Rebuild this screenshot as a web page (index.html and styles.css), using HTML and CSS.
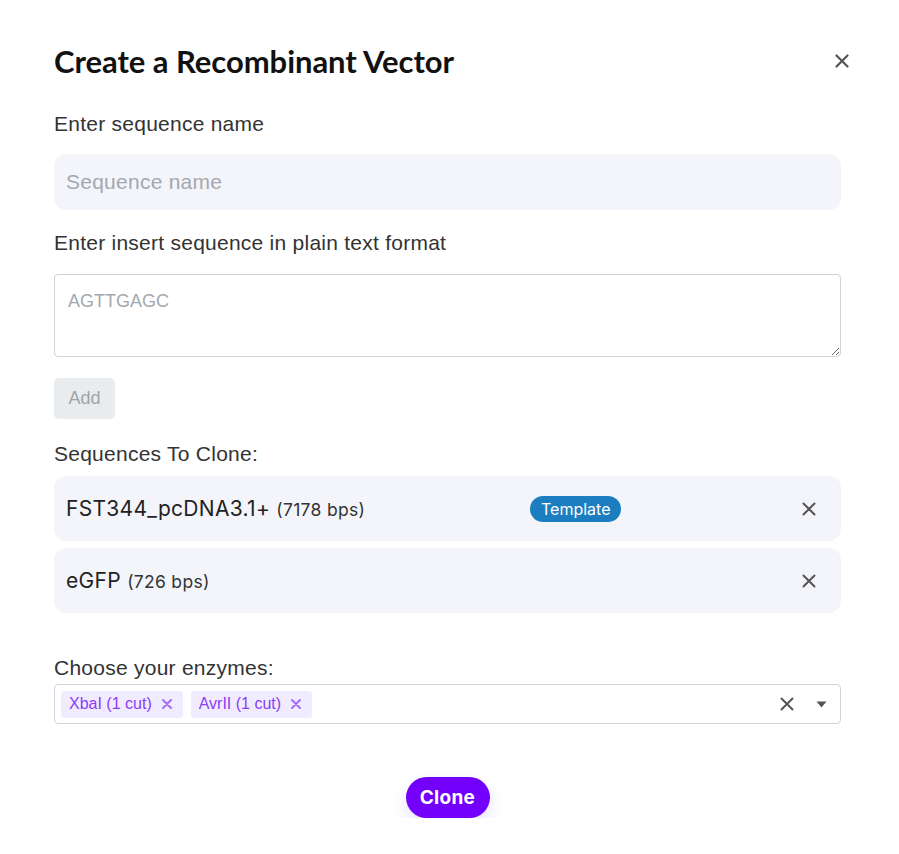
FILE: index.html
```html
<!DOCTYPE html>
<html>
<head>
<meta charset="utf-8">
<link rel="stylesheet" href="styles.css">
</head>
<body>
<div class="modal">
  <div class="header">
    <h1 class="title">Create a Recombinant Vector</h1>
    <button class="close" aria-label="Close">
      <svg width="14" height="14" viewBox="0 0 14 14"><path d="M1.5 1.5L12.5 12.5M12.5 1.5L1.5 12.5" stroke="#555" stroke-width="2.2" stroke-linecap="round"/></svg>
    </button>
  </div>

  <label class="label first">Enter sequence name</label>
  <input class="name-input" type="text" placeholder="Sequence name">

  <label class="label second">Enter insert sequence in plain text format</label>
  <textarea class="seq-area" placeholder="AGTTGAGC"></textarea>

  <button class="add-btn">Add</button>

  <div class="label third">Sequences To Clone:</div>
  <div class="seq-list">
    <div class="seq-card">
      <div class="seq-name">FST344_pcDNA3.1+ <span class="bps">(7178 bps)</span></div>
      <span class="badge">Template</span>
      <svg class="rm" width="14" height="14" viewBox="0 0 14 14"><path d="M1.5 1.5L12.5 12.5M12.5 1.5L1.5 12.5" stroke="#555" stroke-width="2" stroke-linecap="round"/></svg>
    </div>
    <div class="seq-card">
      <div class="seq-name">eGFP <span class="bps">(726 bps)</span></div>
      <svg class="rm" width="14" height="14" viewBox="0 0 14 14"><path d="M1.5 1.5L12.5 12.5M12.5 1.5L1.5 12.5" stroke="#555" stroke-width="2" stroke-linecap="round"/></svg>
    </div>
  </div>

  <div class="label fourth">Choose your enzymes:</div>
  <div class="select">
    <div class="chips">
      <span class="chip">XbaI (1 cut)<svg width="10" height="10" viewBox="0 0 10 10"><path d="M1 1L9 9M9 1L1 9" stroke="#a56ef5" stroke-width="2" stroke-linecap="round"/></svg></span>
      <span class="chip">AvrII (1 cut)<svg width="10" height="10" viewBox="0 0 10 10"><path d="M1 1L9 9M9 1L1 9" stroke="#a56ef5" stroke-width="2" stroke-linecap="round"/></svg></span>
    </div>
    <div class="controls">
      <svg width="14" height="14" viewBox="0 0 14 14"><path d="M1.5 1.5L12.5 12.5M12.5 1.5L1.5 12.5" stroke="#555" stroke-width="2" stroke-linecap="round"/></svg>
      <svg width="11" height="7" viewBox="0 0 11 7"><path d="M0.5 0.5H10.5L5.5 6.5Z" fill="#555"/></svg>
    </div>
  </div>

  <div class="footer">
    <button class="clone-btn">Clone</button>
  </div>
</div>
</body>
</html>
```

FILE: styles.css
```css
* { box-sizing: border-box; }
html, body { margin: 0; padding: 0; background: #fff; }
body { font-family: "Liberation Sans", Arial, sans-serif; color: #333; }

.modal {
  width: 899px;
  padding: 40px 58px 0 54px;
  display: flex;
  flex-direction: column;
}

.header {
  display: flex;
  justify-content: space-between;
  align-items: center;
  height: 42px;
}
.title {
  margin: 0;
  font-family: Lato, sans-serif;
  font-weight: 700;
  font-size: 31px;
  color: #111;
  letter-spacing: -0.05px;
}
.close {
  border: 0;
  background: none;
  padding: 0;
  margin-right: -8px;
  display: flex;
}

.label {
  display: block;
  font-size: 21px;
  letter-spacing: 0.25px;
  color: #333;
  line-height: 24px;
}
.label.first { margin-top: 30px; }
.label.second { margin-top: 21px; }
.label.third { margin-top: 23px; }
.label.fourth { margin-top: 43px; }

.name-input {
  margin-top: 18px;
  width: 787px;
  height: 56px;
  border: 0;
  border-radius: 12px;
  background: #f4f5fa;
  padding: 0 12px;
  font-family: "Liberation Sans", Arial, sans-serif;
  font-size: 21px;
  letter-spacing: 0.25px;
  outline: none;
}
.name-input::placeholder { color: #a4a8ae; }

.seq-area {
  margin-top: 19px;
  width: 787px;
  height: 83px;
  border: 1px solid #cfd2d6;
  border-radius: 4px;
  padding: 16px 13px;
  font-family: "Liberation Sans", Arial, sans-serif;
  font-size: 18px;
  resize: vertical;
  outline: none;
}
.seq-area::placeholder { color: #a4a8ae; }

.add-btn {
  margin-top: 21px;
  align-self: flex-start;
  width: 61px;
  height: 41px;
  border: 0;
  border-radius: 5px;
  background: #e9ecef;
  color: #a0a4a9;
  font-family: "Liberation Sans", Arial, sans-serif;
  font-size: 18px;
  padding: 0;
}

.seq-list {
  margin-top: 10px;
  display: flex;
  flex-direction: column;
  gap: 7px;
  width: 787px;
}
.seq-card {
  height: 65px;
  border-radius: 12px;
  background: #f4f5fa;
  display: flex;
  align-items: center;
  padding: 0 25px 0 12px;
  position: relative;
}
.seq-name {
  font-family: Inter, sans-serif;
  font-size: 21px;
  letter-spacing: 0.3px;
  color: #222;
  flex: 1;
}
.bps { font-size: 17.5px; letter-spacing: 0.3px; color: #333; }
.badge {
  position: absolute;
  left: 476px;
  top: 20px;
  height: 26px;
  padding: 0 11px;
  border-radius: 13px;
  background: #1c7ec1;
  color: #fff;
  font-family: Inter, sans-serif;
  font-size: 16px;
  line-height: 26px;
}
.rm { flex: none; }

.select {
  margin-top: 4px;
  width: 787px;
  height: 40px;
  border: 1px solid #cfd2d6;
  border-radius: 4px;
  display: flex;
  align-items: center;
  justify-content: space-between;
  padding: 0 13px 0 6px;
}
.chips { display: flex; gap: 8px; }
.chip {
  display: flex;
  align-items: center;
  gap: 10px;
  height: 27px;
  padding: 0 11px 0 8px;
  border-radius: 3px;
  background: #f1ebff;
  color: #8a3ef5;
  font-size: 16px;
}
.controls {
  display: flex;
  align-items: center;
  gap: 22px;
}

.footer {
  display: flex;
  justify-content: center;
  margin-top: 53px;
  padding-right: 0;
}
.clone-btn {
  width: 84px;
  height: 41px;
  border: 0;
  border-radius: 21px;
  background: #7200fb;
  color: #fff;
  font-family: Inter, sans-serif;
  font-weight: 700;
  font-size: 19px;
  letter-spacing: 0.3px;
  box-shadow: 0 8px 16px rgba(110, 90, 255, 0.18);
  padding: 0;
}
```
